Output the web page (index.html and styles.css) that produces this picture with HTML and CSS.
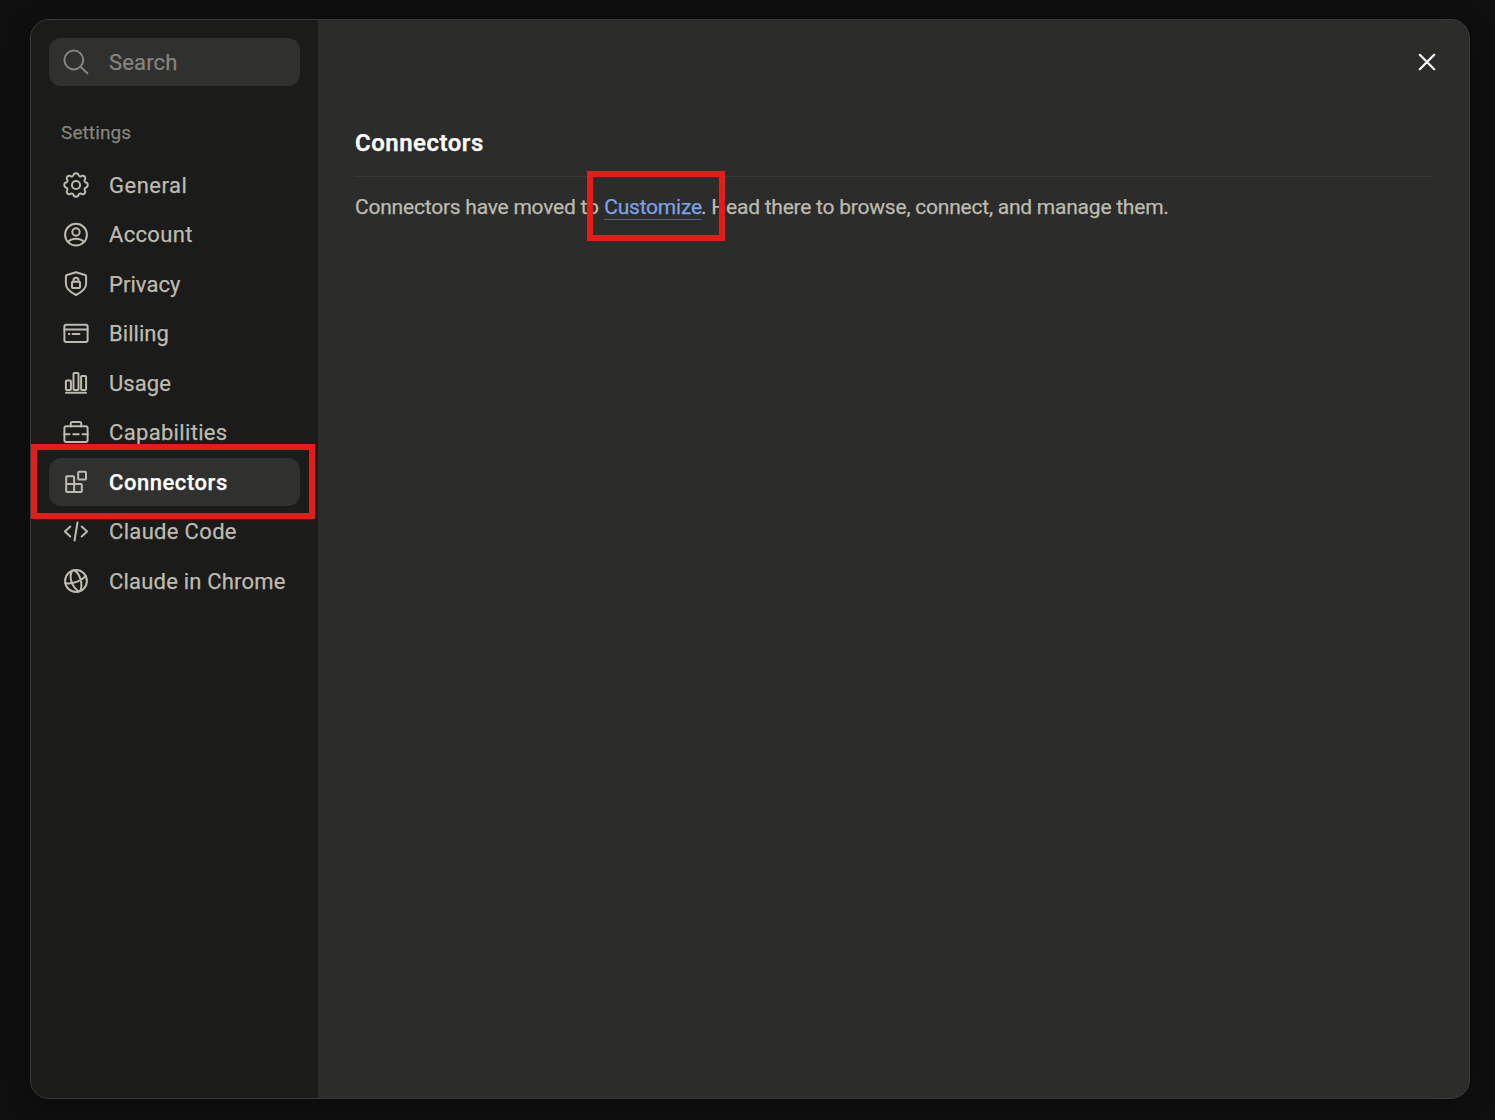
FILE: index.html
```html
<!DOCTYPE html>
<html lang="en">
<head>
    <meta charset="UTF-8">
    <meta name="viewport" content="width=device-width, initial-scale=1.0">
    <title>Settings - Connectors</title>
    <link rel="stylesheet" href="styles.css">
</head>
<body>
    <div class="modal">
        <aside class="sidebar">
            <label class="search">
                <svg class="icon" viewBox="0 0 30 30"><circle cx="12.8" cy="13" r="9.4"/><path d="M19.5 19.7l6.9 6.5"/></svg>
                <input type="text" placeholder="Search">
            </label>

            <h3 class="group-title">Settings</h3>
            <nav class="menu">
                <a class="menu-item general" href="#">
                    <svg class="icon" viewBox="-15 -15 30 30"><path d="M10.8 2.2C8.6 2.5 7.8 4.5 9.2 6.1A2.5 2.5 0 0 1 6.1 9.2C4.5 7.8 2.5 8.6 2.2 10.800A3.1 3.1 0 0 1-2.200 10.800C-2.500 8.600-4.500 7.800-6.100 9.200A2.500 2.500 0 0 1-9.200 6.100C-7.800 4.500-8.600 2.500-10.800 2.200A3.100 3.100 0 0 1-10.800-2.200C-8.600-2.500-7.800-4.500-9.200-6.100A2.500 2.500 0 0 1-6.100-9.200C-4.500-7.800-2.500-8.600-2.200-10.800A3.100 3.100 0 0 1 2.200-10.800C2.500-8.600 4.500-7.800 6.100-9.200A2.500 2.500 0 0 1 9.200-6.100C7.800-4.500 8.600-2.500 10.800-2.200A3.100 3.100 0 0 1 10.800 2.200z"/><circle r="4.1"/></svg>
                    <span>General</span>
                </a>
                <a class="menu-item account" href="#">
                    <svg class="icon" viewBox="0 0 30 30"><circle cx="15" cy="14.7" r="10.9"/><circle cx="15" cy="12" r="3.7"/><path d="M7.3 22c1.5-2.2 4.2-3.2 7.7-3.2s6.2 1 7.7 3.2"/></svg>
                    <span>Account</span>
                </a>
                <a class="menu-item privacy" href="#">
                    <svg class="icon" viewBox="0 0 30 30"><path d="M15 3.3l9.1 2.7q1 .3 1 1.3v7.5c0 4.8-4.6 8.5-10.1 11.2C9.5 23.3 4.9 19.6 4.9 14.8V7.3q0-1 1-1.3z"/><rect x="11" y="12.7" width="8" height="6.3" rx=".7"/><path d="M12.5 12.7v-1.5a2.5 2.5 0 0 1 5 0v1.5"/></svg>
                    <span>Privacy</span>
                </a>
                <a class="menu-item billing" href="#">
                    <svg class="icon" viewBox="0 0 30 30"><rect x="3.4" y="5.7" width="23.2" height="17.3" rx="1.7"/><path d="M3.4 10.4h23.2M7.8 15h.7M11.6 15h6.8"/></svg>
                    <span>Billing</span>
                </a>
                <a class="menu-item usage" href="#">
                    <svg class="icon" viewBox="0 0 30 30"><rect x="4.9" y="12.5" width="5" height="9.5" rx=".8"/><rect x="12.5" y="5" width="5" height="17" rx=".8"/><rect x="20.1" y="8" width="5" height="14" rx=".8"/><path d="M5 24.7h20"/></svg>
                    <span>Usage</span>
                </a>
                <a class="menu-item capabilities" href="#">
                    <svg class="icon" viewBox="0 0 30 30"><rect x="3.4" y="8.2" width="23.2" height="15.9" rx="2"/><path d="M9.8 8.2V5.5q0-1.500 1.500-1.500h7.400q1.500 0 1.500 1.500v2.700M3.400 16.200h5M12.300 16.200h5.400M21.600 16.200h5"/></svg>
                    <span>Capabilities</span>
                </a>
                <a class="menu-item connectors active" href="#">
                    <svg class="icon" viewBox="0 0 30 30"><path d="M6 9.3h6.3q.8 0 .8.8v7h6.9q.8 0 .8.8v6.4q0 .8-.8.8H6q-.8 0-.8-.8V10.1q0-.8.8-.8zM5.2 17.1h7.9v8"/><rect x="17.2" y="4.8" width="7.8" height="7.8" rx=".9"/></svg>
                    <span>Connectors</span>
                    <i class="marker"></i>
                </a>
                <a class="menu-item code" href="#">
                    <svg class="icon" viewBox="0 0 30 30"><path d="M9.3 9.5L3.9 14.5l5.4 5M20.7 9.5l5.4 5-5.4 5M16.5 5.5l-3 18"/></svg>
                    <span>Claude Code</span>
                </a>
                <a class="menu-item chrome" href="#">
                    <svg class="icon" viewBox="0 0 30 30"><circle cx="15" cy="15" r="10.9"/><path d="M11.3 4.7C7.3 11 11 21 17.8 25.5M13.5 4.1c6 4.5 8.4 14.3 5.8 20.9M4.2 17.3c7.8.9 16.2-2.1 20.6-7.4"/></svg>
                    <span>Claude in Chrome</span>
                </a>
            </nav>
        </aside>

        <main class="content">
            <button class="close-button" aria-label="Close">
                <svg viewBox="0 0 30 30"><path d="M7.8 7.8l14.4 14.4M22.2 7.8L7.8 22.2"/></svg>
            </button>
            <h2>Connectors</h2>
            <p>Connectors have moved to <a class="link" href="#">Customize<i class="marker"></i></a>. Head there to browse, connect, and manage them.</p>
        </main>
    </div>
</body>
</html>
```

FILE: styles.css
```css
:root {
    --page: #0f0f0f;
    --sidebar: #1b1b19;
    --surface: #2c2c2a;
    --raised: #30302e;
    --border: #3a3a38;
    --text: #bdbbb0;
    --muted: #85847d;
    --link: #7da2e6;
    --marker: #e81b1b;
}

* {
    margin: 0;
    padding: 0;
    box-sizing: border-box;
}

body {
    height: 1120px;
    padding: 19px 25px 21px 30px;
    background-color: var(--page);
    color: var(--text);
    font-family: Roboto, "Liberation Sans", sans-serif;
    -webkit-text-stroke: 0.25px currentColor;
    overflow: hidden;
}

a {
    color: inherit;
    text-decoration: none;
}

.modal {
    display: flex;
    height: 1080px;
    border: 1px solid var(--border);
    border-radius: 19px;
    background-color: var(--surface);
    box-shadow: 0 6px 24px rgba(0, 0, 0, 0.3);
}

.sidebar {
    width: 287px;
    padding: 18px;
    background-color: var(--sidebar);
    border-radius: 18px 0 0 18px;
}

.icon {
    flex: none;
    width: 30px;
    height: 30px;
    fill: none;
    stroke: currentColor;
    stroke-width: 2;
    stroke-linecap: round;
    stroke-linejoin: round;
}

.search {
    display: flex;
    align-items: center;
    gap: 18px;
    height: 48px;
    padding: 0 12px;
    border-radius: 12px;
    background-color: var(--raised);
    color: var(--muted);
}

.search input {
    width: 100%;
    min-width: 0;
    border: none;
    outline: none;
    background: none;
    font: 400 22px Roboto, sans-serif;
    letter-spacing: 0.15px;
}

.search input::placeholder {
    color: var(--muted);
}

.group-title {
    margin: 34px 0 16px;
    padding-left: 12px;
    color: var(--muted);
    font-size: 19px;
    font-weight: 400;
    letter-spacing: 0.1px;
    line-height: 25px;
}

.menu {
    display: flex;
    flex-direction: column;
    gap: 1.5px;
}

.menu-item {
    position: relative;
    display: flex;
    align-items: center;
    gap: 18px;
    height: 48px;
    padding: 0 12px;
    border-radius: 12px;
    font-size: 22px;
    letter-spacing: 0.05px;
    white-space: nowrap;
}

.general {
    letter-spacing: 0.5px;
}

.account,
.capabilities,
.code {
    letter-spacing: 0.33px;
}

.chrome {
    letter-spacing: 0.2px;
}

.menu-item.active {
    background-color: var(--raised);
}

.menu-item.active span {
    color: #fff;
    font-weight: 500;
    letter-spacing: 0.55px;
}

.marker {
    position: absolute;
    z-index: 1;
    border: 6px solid var(--marker);
    pointer-events: none;
}

.menu-item .marker {
    inset: -14px -15px -13px -18px;
}

.content {
    flex: 1;
    display: flex;
    flex-direction: column;
    padding: 27px 37px;
}

.close-button {
    align-self: flex-end;
    width: 30px;
    height: 30px;
    margin-right: -10px;
    border: none;
    background: none;
}

.close-button svg {
    display: block;
    fill: none;
    stroke: #fff;
    stroke-width: 2.2;
    stroke-linecap: round;
}

h2 {
    margin-top: 51px;
    padding-bottom: 18px;
    border-bottom: 1px solid #383836;
    color: #fff;
    font-size: 24px;
    font-weight: 600;
    letter-spacing: 0.5px;
    line-height: 30px;
}

p {
    margin-top: 15px;
    font-size: 21px;
    letter-spacing: -0.21px;
    word-spacing: -0.12px;
    line-height: 30px;
    white-space: nowrap;
}

.link {
    position: relative;
    display: inline-block;
    height: 28px;
    margin-left: 0.6px;
    margin-right: -0.9px;
    border-bottom: 1px solid #4e608a;
    color: var(--link);
}

.link .marker {
    inset: -21px -23.2px -22px -17.2px;
}
```
